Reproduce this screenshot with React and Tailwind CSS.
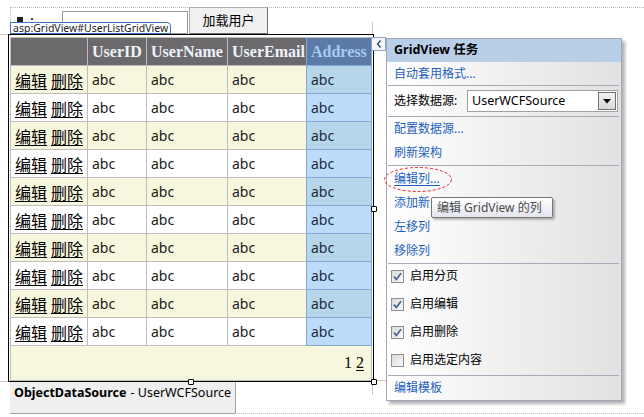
import React from 'react';

const gridCols = 'grid grid-cols-[77px_59px_81px_79px_65px]';
const linkCls = 'flex h-[24px] items-center pl-[7px] text-[#1f5fbf]';

function Sep() {
  return <div className="ml-px mr-[2px] h-px shrink-0 bg-[#a9a9ba]" />;
}

function CheckBox({ checked }) {
  return (
    <span className="flex h-[13px] w-[13px] items-center justify-center border border-[#8f8f8f] bg-gradient-to-br from-[#d9d9d9] to-[#fafafa]">
      {checked && (
        <svg width="9" height="9" viewBox="0 0 9 9">
          <path d="M1 4.6 L3.4 7.4 L8 1.2" fill="none" stroke="#4a5d94" strokeWidth="1.7" />
        </svg>
      )}
    </span>
  );
}

function CheckRow({ checked, label }) {
  return (
    <div className="flex h-[24px] items-center gap-[6px] pl-[4px] text-black">
      <CheckBox checked={checked} />
      <span>{label}</span>
    </div>
  );
}

function DataRow({ odd }) {
  return (
    <div className={odd ? `${gridCols} h-[28px] bg-[#f7f7de]` : `${gridCols} h-[28px] bg-white`}>
      <div className="flex items-center border-r border-b border-[#bdbdbd] pl-[4px] font-['Noto_Sans_CJK_SC',sans-serif] text-[16px] text-black">
        <a className="underline underline-offset-[2px]">编辑</a>
        <a className="ml-[4px] underline underline-offset-[2px]">删除</a>
      </div>
      <div className="flex items-center border-r border-b border-[#bdbdbd] pl-[4px]">abc</div>
      <div className="flex items-center border-r border-b border-[#bdbdbd] pl-[4px]">abc</div>
      <div className="flex items-center border-r border-b border-r-[#7ea9d8] border-b-[#bdbdbd] pl-[4px]">abc</div>
      <div
        className={
          odd
            ? 'flex items-center border-r border-b border-[#7ea9d8] bg-[#b6d6ea] pl-[4px] text-[#1d2a3c]'
            : 'flex items-center border-r border-b border-[#7ea9d8] bg-[#bddcfc] pl-[4px] text-[#1d2a3c]'
        }
      >
        abc
      </div>
    </div>
  );
}

export default function App() {
  const rows = Array.from({ length: 10 }, (_, i) => i);

  return (
    <div className="relative h-[417px] w-[644px] overflow-hidden bg-white font-['Noto_Sans','Noto_Sans_CJK_SC',sans-serif] text-[14px] text-[#1a1a1a]">
      {/* design surface frame */}
      <div className="absolute left-[10px] top-[7px] h-[407px] w-[700px] border-t border-l border-b border-dotted border-[#b8b8b8]" />
      <div className="absolute left-[17px] top-[17px] h-[5px] w-[6px] bg-[#222]" />
      <div className="absolute left-[31px] top-[18px] h-[2px] w-[2px] bg-[#444]" />

      <div className="relative pt-[7px]">
        <div className="flex items-start pl-[62px]">
          <div className="mt-[4px] h-[23px] w-[126px] border border-[#9a9a9a] bg-white" />
          <button className="ml-px flex h-[27px] w-[79px] items-center justify-center border border-[#adadad] border-r-[#6f6f6f] border-b-[#6f6f6f] bg-[#f0f0f0] text-[13px] text-black">
            加载用户
          </button>
        </div>

        {/* GridView */}
        <div className="ml-[8px] w-[366px] border border-black px-px pt-[2px]">
          <div className="border-l border-t border-[#bdbdbd] text-[14px]">
            <div className={`${gridCols} h-[28px] bg-[#6b696b] font-['Liberation_Serif',serif] text-[16px] font-bold text-[#eef3fb]`}>
              <div className="border-r border-b border-[#bdbdbd]" />
              <div className="flex items-center border-r border-b border-[#bdbdbd] pl-[4px]">UserID</div>
              <div className="flex items-center border-r border-b border-[#bdbdbd] pl-[4px]">UserName</div>
              <div className="flex items-center border-r border-b border-r-[#7ea9d8] border-b-[#bdbdbd] pl-[4px]">UserEmail</div>
              <div className="flex items-center border-r border-b border-[#7ea9d8] bg-[#5b7ba6] pl-[4px] text-[#a7caef]">Address</div>
            </div>
            {rows.map((i) => (
              <DataRow key={i} odd={i % 2 === 0} />
            ))}
            <div className="flex h-[35px] items-center justify-end border-r border-b border-[#bdbdbd] bg-[#f7f7de] pr-[7px] font-['Liberation_Serif',serif] text-[16px] text-black">
              <span>1</span>
              <span className="ml-[4px] underline underline-offset-[2px]">2</span>
            </div>
          </div>
        </div>

        <div className="ml-[10px] flex h-[32px] w-[226px] items-center border-r border-b border-[#a3a3a3] bg-[#efefef] pb-[8px] pl-[4px] text-[12.5px] text-black">
          <span className="font-bold">ObjectDataSource</span>
          <span className="ml-[4px]">- UserWCFSource</span>
        </div>
      </div>

      {/* designer overlays */}
      <div className="absolute left-[10px] top-[22px] flex h-[12px] w-[161px] items-center rounded-tr-[4px] border border-[#3e72c4] bg-white pl-[2px] text-[10.5px] leading-none text-[#1a1a1a]">
        asp:GridView#UserListGridView
      </div>
      <div className="absolute left-0 top-[34px] h-px w-[8px] bg-[#e6bcbc]" />
      <div className="absolute left-[372px] top-[22px] h-[12px] w-px bg-[#e6bcbc]" />
      <div className="absolute left-0 top-[381px] h-px w-[8px] bg-[#e6bcbc]" />
      <div className="absolute left-[372px] top-[385px] h-[10px] w-px bg-[#e6bcbc]" />
      <div className="absolute left-[377px] top-[380px] h-px w-[9px] bg-[#e6bcbc]" />

      <div className="absolute left-[188px] top-[379px] h-[6px] w-[6px] rounded-[1px] border border-black bg-white" />
      <div className="absolute left-[371px] top-[379px] h-[6px] w-[6px] rounded-[1px] border border-black bg-white" />
      <div className="absolute left-[371px] top-[206px] h-[6px] w-[6px] rounded-[1px] border border-black bg-white" />

      <div className="absolute left-[371px] top-[37px] flex h-[14px] w-[15px] items-center justify-center border border-[#8ea3c4] bg-[#f5f7fb]">
        <svg width="6" height="8" viewBox="0 0 6 8">
          <path d="M4.5 0.5 L1.5 4 L4.5 7.5" fill="none" stroke="#283a5c" strokeWidth="1.2" />
        </svg>
      </div>

      {/* GridView tasks panel */}
      <div className="absolute left-[386px] top-[38px] flex h-[363px] w-[236px] flex-col border border-[#a3a6b6] bg-gradient-to-r from-white to-[#e1e1e1] text-[12px] shadow-[3px_3px_3px_rgba(0,0,0,0.3)]">
        <div className="flex h-[23px] shrink-0 items-center bg-[#b9cfe8] pl-[7px] text-[12.5px] font-bold text-black">GridView 任务</div>
        <div className="flex h-[23px] shrink-0 items-center pl-[7px] text-[#1f5fbf]">自动套用格式...</div>
        <Sep />
        <div className="flex h-[30px] shrink-0 items-center pl-[7px] text-black">
          <span>选择数据源:</span>
          <div className="ml-auto mr-[3px] flex h-[22px] w-[151px] items-center border border-[#a0a0a0] bg-white pl-[4px] text-[12.5px]">
            <span>UserWCFSource</span>
            <span className="ml-auto mr-px flex h-[18px] w-[18px] items-center justify-center border border-[#707070] bg-gradient-to-b from-[#f2f2f2] to-[#d8d8d8]">
              <svg width="8" height="5" viewBox="0 0 8 5">
                <polygon points="0,0 8,0 4,4.5" fill="#000" />
              </svg>
            </span>
          </div>
        </div>
        <Sep />
        <div className="flex shrink-0 flex-col">
          <div className={linkCls}>配置数据源...</div>
          <div className={linkCls}>刷新架构</div>
        </div>
        <Sep />
        <div className="flex shrink-0 flex-col pt-px">
          <div className={linkCls}>
            <span className="underline underline-offset-[2px]">编辑列...</span>
          </div>
          <div className={linkCls}>
            <span className="w-[37px] overflow-hidden whitespace-nowrap">添加新列...</span>
          </div>
          <div className={linkCls}>左移列</div>
          <div className={linkCls}>移除列</div>
        </div>
        <Sep />
        <div className="flex shrink-0 flex-col gap-[4px] pb-[3px]">
          <CheckRow checked label="启用分页" />
          <CheckRow checked label="启用编辑" />
          <CheckRow checked label="启用删除" />
          <CheckRow label="启用选定内容" />
        </div>
        <Sep />
        <div className={linkCls}>编辑模板</div>
      </div>

      <svg className="absolute left-[383px] top-[166px]" width="70" height="27" viewBox="0 0 70 27">
        <ellipse cx="35" cy="13.5" rx="33.5" ry="12" fill="none" stroke="#e3262b" strokeWidth="1" strokeDasharray="3 2" />
      </svg>

      <div className="absolute left-[431px] top-[197px] flex h-[21px] w-[122px] items-center rounded-[2px] border border-[#767676] bg-gradient-to-b from-white to-[#e4e5ee] pl-[5px] text-[12px] text-[#4c4c4c] shadow-[2px_2px_2px_rgba(0,0,0,0.25)]">
        编辑 GridView 的列
      </div>
    </div>
  );
}
